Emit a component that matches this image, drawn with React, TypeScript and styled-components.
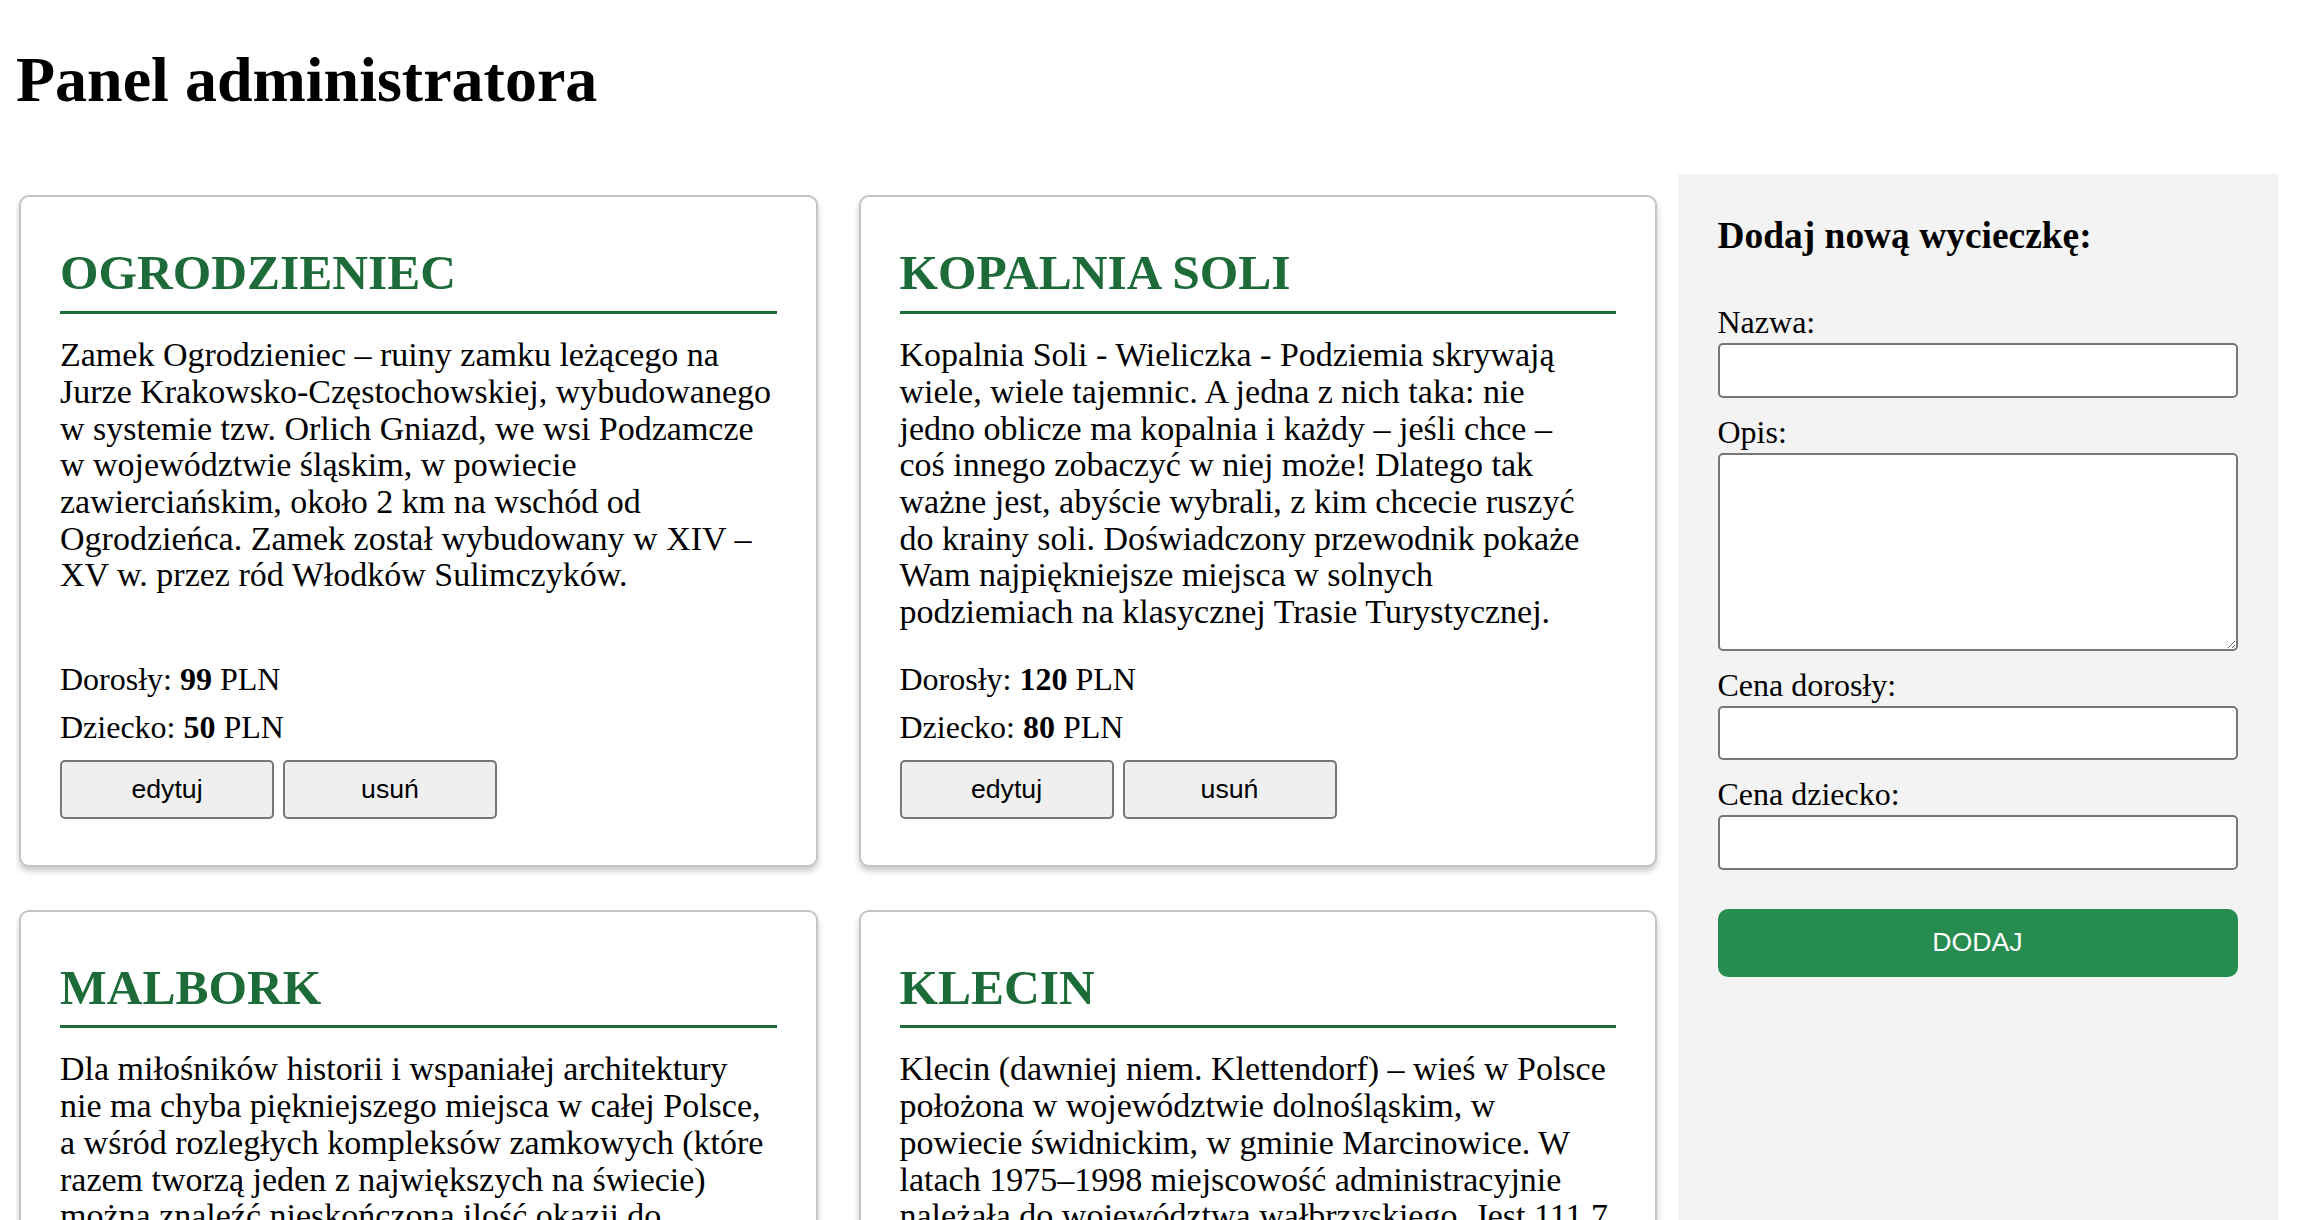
import React from "react";
import styled, { createGlobalStyle } from "styled-components";

const GlobalStyle = createGlobalStyle`
  html { overflow: hidden; }
  html::-webkit-scrollbar { display: none; }
  body {
    margin: 0 16px 16px;
    font-family: "Liberation Serif", "Times New Roman", serif;
    color: #000;
    background: #fff;
  }
`;

const Page = styled.div`
  padding-top: 0.1px;
`;

const Title = styled.h1`
  font-size: 64px;
  font-weight: bold;
  margin: 42.78px 0 57.6px;
  line-height: normal;
`;

const Layout = styled.div`
  display: flex;
  align-items: stretch;
  padding-left: 3px;
`;

const CardsGrid = styled.div`
  flex: 0 0 1638px;
  display: grid;
  grid-template-columns: 798.5px 798.5px;
  column-gap: 41px;
  row-gap: 42.3px;
  padding-top: 21px;
  align-items: stretch;
`;

const Card = styled.article`
  display: flex;
  flex-direction: column;
  box-sizing: border-box;
  background: #fff;
  border: 2px solid #c4c4c4;
  border-radius: 10px;
  box-shadow: 0 4px 6px rgba(0, 0, 0, 0.22);
  padding: 48px 39px 46.4px;
`;

const CardTitle = styled.h2`
  margin: 0;
  font-size: 49.5px;
  font-weight: bold;
  line-height: 55.2px;
  color: #1d6b38;
  text-transform: uppercase;
  padding-bottom: 10.6px;
  border-bottom: 3px solid #1d6b38;
`;

const Description = styled.p`
  flex: 1 0 auto;
  margin: 23px 0 30.5px;
  font-size: 34px;
  line-height: 36.67px;
  white-space: nowrap;
`;

const Price = styled.p<{ $last?: boolean }>`
  margin: 0 0 ${(p) => (p.$last ? "13.7px" : "11.2px")};
  font-size: 32px;
  line-height: normal;
`;

const ButtonRow = styled.div`
  display: flex;
  gap: 9px;
`;

const SmallButton = styled.button`
  width: 214px;
  height: 59px;
  box-sizing: border-box;
  border: 2px solid #767676;
  border-radius: 5px;
  background: #efefef;
  color: #000;
  font-family: "Liberation Sans", Arial, sans-serif;
  font-size: 26.67px;
  padding: 0;
`;

const Sidebar = styled.aside`
  flex: 0 0 600px;
  box-sizing: border-box;
  margin-left: 20.5px;
  background: #f3f3f3;
  padding: 40px 40px;
  min-height: 1100px;
`;

const FormTitle = styled.h3`
  margin: 0 0 47px;
  font-size: 37.44px;
  font-weight: bold;
  line-height: normal;
`;

const Label = styled.label`
  display: block;
  font-size: 32px;
  line-height: normal;
  margin-bottom: 1.6px;
`;

const TextInput = styled.input`
  display: block;
  width: 100%;
  box-sizing: border-box;
  height: 54.5px;
  margin: 0 0 16.4px;
  border: 2px solid #767676;
  border-radius: 5px;
  background: #fff;
  font-size: 26px;
`;

const TextArea = styled.textarea`
  display: block;
  width: 100%;
  box-sizing: border-box;
  height: 198px;
  margin: 0 0 16.4px;
  border: 2px solid #767676;
  border-radius: 5px;
  background: #fff;
  resize: both;
`;

const SubmitButton = styled.button`
  display: block;
  width: 100%;
  height: 68px;
  margin-top: 39px;
  border: none;
  border-radius: 10px;
  background: #278c50;
  color: #fff;
  font-family: "Liberation Sans", Arial, sans-serif;
  font-size: 26.67px;
  text-transform: uppercase;
`;

type Trip = {
  name: string;
  lines: string[];
  adult: number;
  child: number;
};

const trips: Trip[] = [
  {
    name: "Ogrodzieniec",
    lines: [
      "Zamek Ogrodzieniec – ruiny zamku leżącego na",
      "Jurze Krakowsko-Częstochowskiej, wybudowanego",
      "w systemie tzw. Orlich Gniazd, we wsi Podzamcze",
      "w województwie śląskim, w powiecie",
      "zawierciańskim, około 2 km na wschód od",
      "Ogrodzieńca. Zamek został wybudowany w XIV –",
      "XV w. przez ród Włodków Sulimczyków.",
    ],
    adult: 99,
    child: 50,
  },
  {
    name: "Kopalnia Soli",
    lines: [
      "Kopalnia Soli - Wieliczka - Podziemia skrywają",
      "wiele, wiele tajemnic. A jedna z nich taka: nie",
      "jedno oblicze ma kopalnia i każdy – jeśli chce –",
      "coś innego zobaczyć w niej może! Dlatego tak",
      "ważne jest, abyście wybrali, z kim chcecie ruszyć",
      "do krainy soli. Doświadczony przewodnik pokaże",
      "Wam najpiękniejsze miejsca w solnych",
      "podziemiach na klasycznej Trasie Turystycznej.",
    ],
    adult: 120,
    child: 80,
  },
  {
    name: "Malbork",
    lines: [
      "Dla miłośników historii i wspaniałej architektury",
      "nie ma chyba piękniejszego miejsca w całej Polsce,",
      "a wśród rozległych kompleksów zamkowych (które",
      "razem tworzą jeden z największych na świecie)",
      "można znaleźć nieskończoną ilość okazji do",
      "poznania fascynującej historii zakonu",
      "krzyżackiego i jego wielkich mistrzów.",
    ],
    adult: 110,
    child: 60,
  },
  {
    name: "Klecin",
    lines: [
      "Klecin (dawniej niem. Klettendorf) – wieś w Polsce",
      "położona w województwie dolnośląskim, w",
      "powiecie świdnickim, w gminie Marcinowice. W",
      "latach 1975–1998 miejscowość administracyjnie",
      "należała do województwa wałbrzyskiego. Jest 111,7",
      "km od Wrocławia i słynie z pięknych",
      "krajobrazów Przedgórza Sudeckiego.",
    ],
    adult: 70,
    child: 35,
  },
];

function TripCard({ trip }: { trip: Trip }) {
  return (
    <Card>
      <CardTitle>{trip.name}</CardTitle>
      <Description>
        {trip.lines.map((line, i) => (
          <React.Fragment key={i}>
            {line}
            {i < trip.lines.length - 1 && <br />}
          </React.Fragment>
        ))}
      </Description>
      <Price>
        Dorosły: <b>{trip.adult}</b> PLN
      </Price>
      <Price $last>
        Dziecko: <b>{trip.child}</b> PLN
      </Price>
      <ButtonRow>
        <SmallButton type="button">edytuj</SmallButton>
        <SmallButton type="button">usuń</SmallButton>
      </ButtonRow>
    </Card>
  );
}

export default function App() {
  return (
    <Page>
      <GlobalStyle />
      <Title>Panel administratora</Title>
      <Layout>
        <CardsGrid>
          {trips.map((t) => (
            <TripCard key={t.name} trip={t} />
          ))}
        </CardsGrid>
        <Sidebar>
          <FormTitle>Dodaj nową wycieczkę:</FormTitle>
          <form onSubmit={(e) => e.preventDefault()}>
            <Label htmlFor="nazwa">Nazwa:</Label>
            <TextInput id="nazwa" type="text" />
            <Label htmlFor="opis">Opis:</Label>
            <TextArea id="opis" />
            <Label htmlFor="dorosly">Cena dorosły:</Label>
            <TextInput id="dorosly" type="text" />
            <Label htmlFor="dziecko">Cena dziecko:</Label>
            <TextInput id="dziecko" type="text" />
            <SubmitButton type="submit">Dodaj</SubmitButton>
          </form>
        </Sidebar>
      </Layout>
    </Page>
  );
}
